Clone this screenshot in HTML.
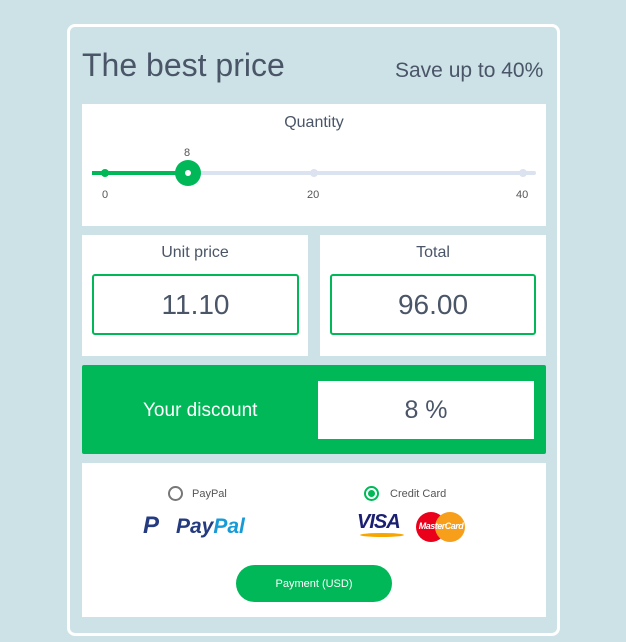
<!DOCTYPE html>
<html><head><style>
*{margin:0;padding:0;box-sizing:border-box}
body{width:626px;height:642px;background:#cce2e6;font-family:"Liberation Sans","DejaVu Sans",sans-serif;color:#4a5568;position:relative;overflow:hidden}
.a{position:absolute}
.card{left:67px;top:24px;width:493px;height:612px;border:3px solid #fff;border-radius:8px;background:#cce2e6}
.p{background:#fff}
.box{border:2px solid #00b857;background:#fff;font-size:28px;color:#4a5568;display:flex;align-items:center;justify-content:center;border-radius:3px}
.t{font-size:16px;color:#4a5568;text-align:center}
.s{font-size:11px;color:#555}
</style></head><body>
<div class="a card"></div>
<div class="a" style="left:82px;top:47px;font-size:32px;color:#4a5568">The best price</div>
<div class="a" style="left:395px;top:59px;font-size:21px;color:#4a5568">Save up to 40%</div>

<div class="a p" style="left:82px;top:104px;width:464px;height:122px"></div>
<div class="a t" style="left:82px;top:114px;width:464px">Quantity</div>
<div class="a s" style="left:184px;top:147px">8</div>
<div class="a" style="left:92px;top:171px;width:444px;height:4px;background:#dbe3f0;border-radius:2px"></div>
<div class="a" style="left:92px;top:171px;width:96px;height:4px;background:#00b857"></div>
<div class="a" style="left:101px;top:169px;width:8px;height:8px;border-radius:50%;background:#00b857"></div>
<div class="a" style="left:310px;top:169px;width:8px;height:8px;border-radius:50%;background:#dbe3f0"></div>
<div class="a" style="left:519px;top:169px;width:8px;height:8px;border-radius:50%;background:#dbe3f0"></div>
<div class="a" style="left:175px;top:160px;width:26px;height:26px;border-radius:50%;background:#00b857"></div>
<div class="a" style="left:185px;top:170px;width:6px;height:6px;border-radius:50%;background:#fff"></div>
<div class="a s" style="left:102px;top:189px">0</div>
<div class="a s" style="left:307px;top:189px">20</div>
<div class="a s" style="left:516px;top:189px">40</div>

<div class="a p" style="left:82px;top:235px;width:226px;height:121px"></div>
<div class="a t" style="left:82px;top:244px;width:226px">Unit price</div>
<div class="a box" style="left:92px;top:274px;width:207px;height:61px">11.10</div>
<div class="a p" style="left:320px;top:235px;width:226px;height:121px"></div>
<div class="a t" style="left:320px;top:244px;width:226px">Total</div>
<div class="a box" style="left:330px;top:274px;width:206px;height:61px">96.00</div>

<div class="a" style="left:82px;top:365px;width:464px;height:89px;background:#00b857;border-radius:2px"></div>
<div class="a" style="left:143px;top:400px;font-size:19px;color:#fff">Your discount</div>
<div class="a" style="left:318px;top:381px;width:216px;height:58px;background:#fff;font-size:25px;display:flex;align-items:center;justify-content:center;color:#4a5568">8 %</div>

<div class="a p" style="left:82px;top:463px;width:464px;height:154px"></div>
<div class="a" style="left:168px;top:486px;width:15px;height:15px;border-radius:50%;border:2px solid #777"></div>
<div class="a s" style="left:192px;top:488px">PayPal</div>
<div class="a" style="left:364px;top:486px;width:15px;height:15px;border-radius:50%;border:2px solid #00b857"></div>
<div class="a" style="left:368px;top:490px;width:7px;height:7px;border-radius:50%;background:#00b857"></div>
<div class="a s" style="left:390px;top:488px">Credit Card</div>
<div class="a" style="left:143px;top:512px;font-size:24px;font-weight:bold;font-style:italic;color:#253b80">P</div>
<div class="a" style="left:176px;top:515px;font-size:21px;font-weight:bold;font-style:italic;color:#253b80">Pay<span style="color:#179bd7">Pal</span></div>
<div class="a" style="left:357px;top:511px;font-size:20px;font-weight:bold;font-style:italic;color:#1a1f71;letter-spacing:-1px">VISA</div>
<div class="a" style="left:360px;top:533px;width:44px;height:4px;background:#f7a600;border-radius:50%"></div>
<div class="a" style="left:416px;top:512px;width:30px;height:30px;border-radius:50%;background:#eb001b"></div>
<div class="a" style="left:435px;top:512px;width:30px;height:30px;border-radius:50%;background:#f79e1b"></div>
<div class="a" style="left:416px;top:521px;width:50px;font-size:9px;font-weight:bold;font-style:italic;color:#fff;text-align:center;letter-spacing:-.5px">MasterCard</div>
<div class="a" style="left:236px;top:565px;width:156px;height:37px;border-radius:19px;background:#00b857;color:#fff;font-size:11px;display:flex;align-items:center;justify-content:center">Payment (USD)</div>
</body></html>
